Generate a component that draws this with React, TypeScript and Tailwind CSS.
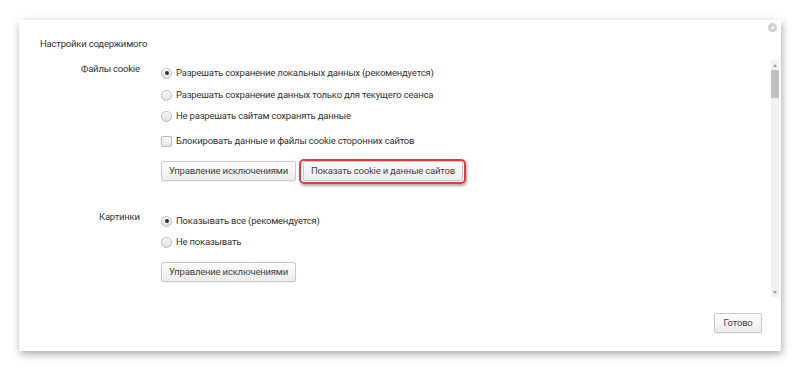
import React from "react";

const font = { fontFamily: 'Roboto, "Noto Sans", Arial, sans-serif', letterSpacing: "-0.2px" };

function Radio({ checked }: { checked?: boolean }) {
  return (
    <span className="flex h-[11px] w-[11px] shrink-0 items-center justify-center rounded-full border border-[#b9b9b9] bg-gradient-to-b from-[#f6f6f6] to-[#e2e2e2] shadow-[inset_0_1px_0_#fff]">
      {checked && <span className="h-[4px] w-[4px] rounded-full bg-[#333]" />}
    </span>
  );
}

function Check() {
  return (
    <span className="h-[11px] w-[11px] shrink-0 rounded-[2px] border border-[#b9b9b9] bg-gradient-to-b from-[#f8f8f8] to-[#e6e6e6]" />
  );
}

function Btn({ children, w }: { children: React.ReactNode; w: string }) {
  return (
    <button
      className={`h-[20px] ${w} whitespace-nowrap rounded-[2px] border border-[#c9c9c9] bg-gradient-to-b from-[#fdfdfd] to-[#ececec] text-[9.5px] leading-none text-[#444] shadow-[0_1px_0_rgba(0,0,0,0.05)]`}
    >
      {children}
    </button>
  );
}

function Row({ children, className = "" }: { children: React.ReactNode; className?: string }) {
  return <div className={`flex h-[14px] items-center gap-[4px] whitespace-nowrap ${className}`}>{children}</div>;
}

export default function App() {
  return (
    <div className="h-[371px] w-[800px] bg-white pl-[19px] pt-[20px]" style={font}>
      <div className="relative flex h-[331px] w-[762px] flex-col bg-white text-[9.5px] text-[#333] shadow-[1px_3px_8px_rgba(0,0,0,0.35)]">
        <div className="absolute right-[4px] top-[3px] flex h-[9px] w-[9px] items-center justify-center rounded-full bg-[#cfcfcf] text-[8px] leading-none text-white">
          ×
        </div>
        <div className="pl-[21px] pt-[16px] leading-[16px]">Настройки содержимого</div>
        <div className="mt-[8px] flex h-[237px]">
          <div className="flex-1 pt-[1px]">
            <div className="flex">
              <div className="w-[142px] whitespace-nowrap pl-[62px] leading-[16px]">Файлы cookie</div>
              <div className="flex flex-col pt-[5px]">
                <Row>
                  <Radio checked />
                  <span>Разрешать сохранение локальных данных (рекомендуется)</span>
                </Row>
                <Row className="mt-[8px]">
                  <Radio />
                  <span>Разрешать сохранение данных только для текущего сеанса</span>
                </Row>
                <Row className="mt-[7px]">
                  <Radio />
                  <span>Не разрешать сайтам сохранять данные</span>
                </Row>
                <Row className="mt-[11px]">
                  <Check />
                  <span>Блокировать данные и файлы cookie сторонних сайтов</span>
                </Row>
                <div className="mt-[13px] flex gap-[7px]">
                  <Btn w="w-[135px]">Управление исключениями</Btn>
                  <div className="relative">
                    <Btn w="w-[160px]">Показать cookie и данные сайтов</Btn>
                    <div className="pointer-events-none absolute -bottom-[3px] -left-[4px] -right-[3px] -top-[2px] rounded-[5px] border-2 border-[#e0393f] shadow-[1px_2px_3px_rgba(0,0,0,0.35)]" />
                  </div>
                </div>
              </div>
            </div>
            <div className="mt-[28px] flex">
              <div className="w-[142px] whitespace-nowrap pl-[80px] leading-[16px]">Картинки</div>
              <div className="flex flex-col pt-[5px]">
                <Row>
                  <Radio checked />
                  <span>Показывать все (рекомендуется)</span>
                </Row>
                <Row className="mt-[7px]">
                  <Radio />
                  <span>Не показывать</span>
                </Row>
                <div className="mt-[13px]">
                  <Btn w="w-[135px]">Управление исключениями</Btn>
                </div>
              </div>
            </div>
          </div>
          <div className="mr-[2px] flex w-[8px] flex-col bg-[#f1f1f1]">
            <div className="flex h-[10px] items-center justify-center">
              <span className="h-0 w-0 border-x-[2.5px] border-b-[3px] border-x-transparent border-b-[#a0a0a0]" />
            </div>
            <div className="h-[28px] bg-[#c1c1c1]" />
            <div className="flex-1" />
            <div className="flex h-[10px] items-center justify-center">
              <span className="h-0 w-0 border-x-[2.5px] border-t-[3px] border-x-transparent border-t-[#a0a0a0]" />
            </div>
          </div>
        </div>
        <div className="flex flex-1 items-start justify-end pr-[19px] pt-[16px]">
          <Btn w="w-[48px]">Готово</Btn>
        </div>
      </div>
    </div>
  );
}
